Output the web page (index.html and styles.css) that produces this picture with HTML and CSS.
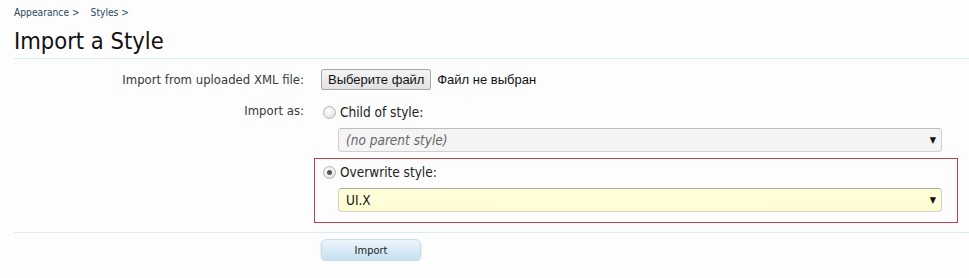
FILE: index.html
```html
<!doctype html>
<html>
<head>
    <title>Import a Style</title>
    <meta http-equiv="Content-Type" content="text/html; charset=utf-8" />
    <link rel="stylesheet" href="styles.css">
</head>
<body>
<div class="crumbs">
    <a href="#">Appearance &gt;</a>
    <a href="#">Styles &gt;</a>
</div>
<h1>Import a Style</h1>

<form class="import-form">
    <div class="row row-file">
        <div class="label">Import from uploaded XML file:</div>
        <div class="ctrl">
            <label class="file-btn">Выберите файл</label>
            <span class="file-name">Файл не выбран</span>
        </div>
    </div>

    <div class="row row-as">
        <div class="label">Import as:</div>
        <div class="ctrl">
            <div class="choice">
                <label class="radio"><span class="dot"></span>Child of style:</label>
                <div class="select empty">(no parent style)<span class="arrow">▼</span></div>
            </div>
            <div class="choice picked">
                <label class="radio"><span class="dot on"></span>Overwrite style:</label>
                <div class="select hilite">UI.X<span class="arrow">▼</span></div>
            </div>
        </div>
    </div>

    <div class="submit">
        <button type="button" class="btn-import">Import</button>
    </div>
</form>
</body>
</html>
```

FILE: styles.css
```css
body          { margin:0; padding:0 0 0 14px; background:#fdfdfe; color:#333; font-family:"DejaVu Sans Condensed", "DejaVu Sans", sans-serif; font-size:13px; }
.crumbs       { padding-top:7px; height:13px; font-size:10.2px; }
.crumbs a     { color:#2b485c; text-decoration:none; margin-right:8px; }
h1            { margin:5px 0 0 0; font-size:23.5px; font-weight:normal; color:#111; line-height:32px; height:32px; padding-bottom:1px; border-bottom:1px solid #d7edf0; }

.row          { display:flex; }
.label        { width:290px; text-align:right; color:#3a3a3a; }
.ctrl         { margin-left:17px; flex:1; }

.row-file     { padding-top:10px; align-items:center; }
.file-btn     { display:inline-block; box-sizing:border-box; height:21px; line-height:19px; padding:0 6px; border:1px solid #a9a9a9; border-radius:2px; background:linear-gradient(#f4f4f4, #e2e2e2); color:#111; font-family:"Liberation Sans", Arial, sans-serif; font-size:13px; }
.file-name    { color:#111; font-family:"Liberation Sans", Arial, sans-serif; font-size:13px; margin-left:2px; }

.row-as       { padding-top:13px; }
.choice       { margin:0 11px 0 -7px; padding:4px 15px 5px 8px; border:1px solid transparent; }
.choice:first-child { margin-top:-5px; }
.choice.picked { border-color:#c0434b; padding-bottom:10px; }
.radio        { display:flex; align-items:center; height:18px; color:#222; font-size:13.5px; }
.dot          { width:11px; height:11px; border-radius:50%; border:1px solid #b4b4b4; background:radial-gradient(circle at 40% 35%, #fff, #dcdcdc); margin-right:4px; position:relative; }
.dot.on::after { content:""; position:absolute; left:3px; top:3px; width:5px; height:5px; border-radius:50%; background:#555; }
.select       { position:relative; box-sizing:border-box; height:24px; line-height:22px; margin:7px 0 0 15px; padding:0 7px; border:1px solid #cfcfcf; border-top-color:#bdbdbd; border-radius:4px; font-size:13.5px; color:#111; }
.select.empty { background:#f4f4f4; color:#666; font-style:italic; }
.select.hilite { background:linear-gradient(#fdfdd6, #fffed8 60%, #fbfbd0); border-color:#d4d4c4; border-top-color:#aaa; }
.arrow        { position:absolute; right:5px; top:0; font-style:normal; font-size:9px; color:#111; }

.submit       { margin-top:9px; padding:6px 0 0 307px; border-top:1px solid #d7edf0; }
.btn-import   { width:100px; height:22px; border:1px solid #c9dbe7; border-radius:6px; background:linear-gradient(#edf6fc, #c4e0f2); box-shadow:0 1px 2px rgba(0,0,0,0.2); color:#222; font-family:inherit; font-size:11px; padding:0; }
```
